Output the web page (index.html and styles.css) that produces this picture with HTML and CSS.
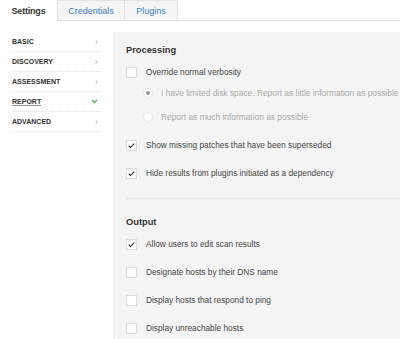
FILE: index.html
```html
<!DOCTYPE html>
<html lang="en">
<head>
    <meta charset="UTF-8">
    <meta name="viewport" content="width=device-width, initial-scale=1.0">
    <title>Scan settings</title>
    <link rel="stylesheet" href="styles.css">
</head>
<body>
    <div id="tabs">
        <span class="tab active">Settings</span>
        <span class="tab">Credentials</span>
        <span class="tab">Plugins</span>
        <span class="tab-fill"></span>
    </div>

    <div id="main">
        <ul id="nav">
            <li class="nav-item">BASIC <span class="chev">&rsaquo;</span></li>
            <li class="nav-item">DISCOVERY <span class="chev">&rsaquo;</span></li>
            <li class="nav-item">ASSESSMENT <span class="chev">&rsaquo;</span></li>
            <li class="nav-item current"><span class="label">REPORT</span>
                <svg class="down" width="7" height="5" viewBox="0 0 7 5"><polyline points="1,1 3.5,3.5 6,1" fill="none" stroke="#4caf50" stroke-width="1.3"/></svg>
            </li>
            <li class="nav-item">ADVANCED <span class="chev">&rsaquo;</span></li>
        </ul>

        <div id="panel">
            <div class="section">
                <h3 class="heading">Processing</h3>
                <div class="row"><span class="box"></span>Override normal verbosity</div>
                <div class="radios">
                    <div class="radio-row"><span class="radio on"></span>I have limited disk space. Report as little information as possible</div>
                    <div class="radio-row"><span class="radio"></span>Report as much information as possible</div>
                </div>
                <div class="row"><span class="box checked"></span>Show missing patches that have been superseded</div>
                <div class="row"><span class="box checked"></span>Hide results from plugins initiated as a dependency</div>
            </div>

            <div class="section">
                <h3 class="heading">Output</h3>
                <div class="row"><span class="box checked"></span>Allow users to edit scan results</div>
                <div class="row"><span class="box"></span>Designate hosts by their DNS name</div>
                <div class="row"><span class="box"></span>Display hosts that respond to ping</div>
                <div class="row"><span class="box"></span>Display unreachable hosts</div>
            </div>
        </div>
    </div>
</body>
</html>
```

FILE: styles.css
```css
body {
    margin: 0;
    height: 339px;
    font-family: "Liberation Sans", Arial, sans-serif;
    color: #444;
    background-color: white;
    overflow: hidden;
}

#tabs {
    display: flex;
    height: 21px;
}

.tab {
    box-sizing: border-box;
    height: 21px;
    padding: 5px 0 0 0;
    font-size: 9px;
    text-align: center;
    color: #3b7dc4;
    background-color: #f5f5f5;
    border: 1px solid #e3e3e3;
    border-right: 0;
}

.tab:nth-child(1) {
    width: 57px;
}

.tab:nth-child(2) {
    width: 67px;
}

.tab:nth-child(3) {
    width: 54px;
    border-right: 1px solid #e3e3e3;
}

.tab.active {
    color: #333;
    background-color: white;
    border: 0;
    padding-top: 6px;
    font-weight: bold;
    letter-spacing: -0.2px;
}

.tab-fill {
    flex: 1;
    border-bottom: 1px solid #e3e3e3;
}

#main {
    display: flex;
    margin-top: 11px;
}

#nav {
    width: 89px;
    margin: 0 12px;
    padding: 0;
    list-style: none;
}

.nav-item {
    display: flex;
    justify-content: space-between;
    align-items: center;
    height: 19px;
    padding-right: 3px;
    font-size: 7px;
    font-weight: bold;
    color: #333;
    border-bottom: 1px dotted #ddd;
}

.chev {
    font-size: 10px;
    font-weight: normal;
    color: #bbb;
}

.current .label {
    text-decoration: underline;
    text-decoration-color: #999;
}

#panel {
    flex: 1;
    background-color: #f4f4f4;
    padding: 12px 0 0 13px;
    height: 307px;
}

.heading {
    margin: 0 0 2px 0;
    height: 12px;
    line-height: 12px;
    font-size: 9.3px;
    font-weight: bold;
    color: #333;
}

.section:first-child {
    padding-bottom: 11px;
    border-bottom: 1px dotted #ddd;
    margin-bottom: 17px;
}

.row {
    display: flex;
    align-items: center;
    height: 28px;
    font-size: 8.3px;
    white-space: nowrap;
    color: #444;
}

.box {
    box-sizing: border-box;
    width: 11px;
    height: 11px;
    margin-right: 9px;
    background-color: white;
    border: 1px solid #ddd;
    position: relative;
}

.box.checked::after {
    content: "";
    position: absolute;
    left: 3px;
    top: 1px;
    width: 2px;
    height: 5px;
    border: solid #222;
    border-width: 0 1.6px 1.6px 0;
    transform: rotate(45deg);
}

.radios {
    margin: -5px 0 2px 0;
}

.radio-row {
    display: flex;
    align-items: center;
    height: 24px;
    padding-left: 17px;
    font-size: 8.4px;
    white-space: nowrap;
    color: #aaa;
}

.radio {
    box-sizing: border-box;
    width: 10px;
    height: 10px;
    margin-right: 8px;
    border-radius: 50%;
    background-color: white;
    border: 1px solid #e6e6e6;
    position: relative;
}

.radio.on::after {
    content: "";
    position: absolute;
    left: 2px;
    top: 2px;
    width: 4px;
    height: 4px;
    border-radius: 50%;
    background-color: #999;
}
```
